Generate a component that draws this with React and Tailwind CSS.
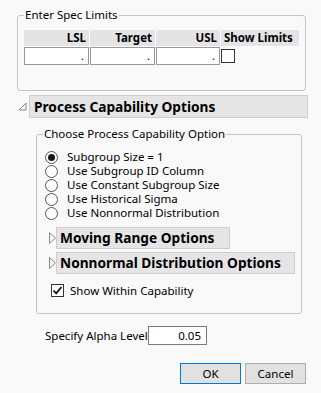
import React from 'react';

const Expanded = () => (
  <svg width="9" height="9" viewBox="0 0 9 9" className="block">
    <path d="M8 1 L8 8 L1 8 Z" fill="#f4f4f4" stroke="#8a8a8a" strokeWidth="1" />
  </svg>
);

const Collapsed = () => (
  <svg width="7" height="12" viewBox="0 0 7 12" className="block">
    <path d="M0.5 0.5 L6.5 6 L0.5 11.5 Z" fill="#f4f4f4" stroke="#8a8a8a" strokeWidth="1" />
  </svg>
);

const Radio = ({ checked }) => (
  <svg width="13" height="13" viewBox="0 0 13 13" className="block shrink-0">
    <circle cx="6.5" cy="6.5" r="6" fill="#fff" stroke="#555" strokeWidth="1" />
    {checked && <circle cx="6.5" cy="6.5" r="3.5" fill="#1a1a1a" />}
  </svg>
);

const options = [
  'Subgroup Size = 1',
  'Use Subgroup ID Column',
  'Use Constant Subgroup Size',
  'Use Historical Sigma',
  'Use Nonnormal Distribution',
];

export default function App() {
  return (
    <div className="w-[321px] h-[393px] overflow-hidden bg-[#f9f9f9] text-[11px] text-black font-['Noto_Sans',sans-serif] pt-[7px]">
      {/* Enter Spec Limits */}
      <fieldset className="ml-[17px] w-[289px] h-[84px] border border-[#c4c4c4] rounded-[3px] pl-[6px]">
        <legend className="px-[1px] leading-[16px] text-[11.5px]">Enter Spec Limits</legend>
        <div className="mt-[7px] grid grid-cols-[65px_65px_64px_78px] gap-[1px] bg-white w-max">
          {['LSL', 'Target', 'USL'].map((h) => (
            <div key={h} className="bg-[#e4e4e4] font-bold text-right pr-[3px] h-[16px] leading-[16px] text-[11.5px]">{h}</div>
          ))}
          <div className="bg-[#e4e4e4] font-bold pl-[3px] h-[16px] leading-[16px] whitespace-nowrap text-[11.5px]">Show Limits</div>
          {[0, 1, 2].map((i) => (
            <div key={i} className="h-[18px] border border-[#9a9a9a] bg-white text-right pr-[4px] leading-[16px]">.</div>
          ))}
          <div className="bg-[#f9f9f9] pt-[2px]">
            <div className="w-[14px] h-[14px] border border-[#333] bg-white" />
          </div>
        </div>
      </fieldset>

      {/* Process Capability Options */}
      <div className="mt-[4px] flex items-center">
        <div className="ml-[18px] w-[11px] flex"><Expanded /></div>
        <div className="w-[279px] h-[23px] bg-[#e5e5e5] border border-[#cdcdcd] pl-[4px] font-bold text-[13.7px] leading-[21px] whitespace-nowrap">
          Process Capability Options
        </div>
      </div>

      <fieldset className="mt-[8px] ml-[36px] w-[266px] h-[188px] border border-[#c4c4c4] rounded-[3px] pl-[6px]">
        <legend className="px-[1px] leading-[16px] text-[11.5px]">Choose Process Capability Option</legend>
        <div className="mt-[8px] flex flex-col">
          {options.map((o, i) => (
            <div key={o} className="flex items-center h-[14px] pl-[2px] gap-[9px] whitespace-nowrap">
              <Radio checked={i === 0} />
              <span className="leading-[14px] text-[11.5px]">{o}</span>
            </div>
          ))}
        </div>

        <div className="mt-[7px] flex items-center">
          <div className="ml-[6px] w-[7px] flex"><Collapsed /></div>
          <div className="w-[174px] h-[22px] bg-[#e5e5e5] border border-[#cdcdcd] pl-[3px] font-bold text-[13.7px] leading-[20px] whitespace-nowrap">
            Moving Range Options
          </div>
        </div>
        <div className="mt-[3px] flex items-center">
          <div className="ml-[6px] w-[7px] flex"><Collapsed /></div>
          <div className="w-[239px] h-[22px] bg-[#e5e5e5] border border-[#cdcdcd] pl-[3px] font-bold text-[13.7px] leading-[20px] whitespace-nowrap">
            Nonnormal Distribution Options
          </div>
        </div>

        <div className="mt-[8px] ml-[8px] flex items-center gap-[6px]">
          <div className="w-[13px] h-[13px] border border-[#333] bg-white flex items-center justify-center">
            <svg width="11" height="11" viewBox="0 0 11 11" className="block">
              <path d="M1.5 5.5 L4.2 8.3 L9.5 2" fill="none" stroke="#111" strokeWidth="1.8" />
            </svg>
          </div>
          <span className="text-[11.5px]">Show Within Capability</span>
        </div>
      </fieldset>

      {/* Alpha level */}
      <div className="mt-[12px] ml-[45px] flex items-center">
        <span className="w-[103px] whitespace-nowrap text-[11.5px]">Specify Alpha Level</span>
        <div className="w-[59px] h-[19px] border border-[#7a7a7a] bg-white text-right pr-[5px] leading-[17px] text-[11.5px]">0.05</div>
      </div>

      {/* Buttons */}
      <div className="mt-[18px] pr-[15px] flex justify-end gap-[4px]">
        <button className="w-[61px] h-[21px] bg-[#e1e1e1] border border-[#0078d7] text-[11.5px] leading-[19px]">OK</button>
        <button className="w-[61px] h-[21px] bg-[#e1e1e1] border border-[#adadad] text-[11.5px] leading-[19px]">Cancel</button>
      </div>
    </div>
  );
}
